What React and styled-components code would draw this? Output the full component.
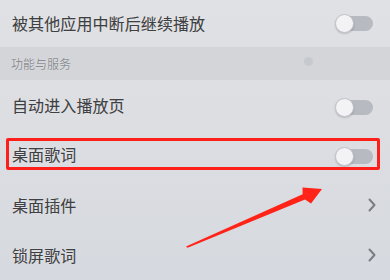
import React from 'react'
import styled, { createGlobalStyle } from 'styled-components'

const GlobalStyle = createGlobalStyle`
  html, body {
    margin: 0;
    padding: 0;
  }
  body {
    font-family: "Noto Sans CJK SC", "Noto Sans", sans-serif;
  }
`

const Screen = styled.div`
  position: relative;
  width: 390px;
  height: 280px;
  overflow: hidden;
  background: linear-gradient(180deg, #e0e1e4 0%, #dcdee2 45%, #d6d9df 100%);
  display: flex;
  flex-direction: column;
`

const Row = styled.div`
  position: relative;
  height: ${p => p.$h || 50}px;
  flex: none;
  display: flex;
  align-items: center;
  justify-content: space-between;
  padding: 0 17px 0 12px;
  box-sizing: border-box;
  ${p => p.$highlight && `
    &::after {
      content: '';
      position: absolute;
      left: 6px;
      right: 10px;
      top: 8px;
      bottom: 10px;
      border: 3px solid #ff1f1a;
      border-radius: 2px;
      box-sizing: border-box;
    }
  `}
`

const Label = styled.span`
  font-size: 16px;
  color: #3e3f42;
  letter-spacing: 0.1px;
  text-shadow: 0 0 1px rgba(255, 255, 255, 0.9), 0 0 0.6px rgba(60, 60, 64, 0.6);
  transform: translateY(${p => p.$dy || 0}px);
`

const Section = styled.div`
  position: relative;
  height: 33px;
  flex: none;
  display: flex;
  align-items: center;
  padding-left: 11px;
  background: #d3d5d9;
`

const SectionTitle = styled.span`
  font-size: 12px;
  color: #8b8d92;
  text-shadow: 0 0 1px rgba(255, 255, 255, 0.8);
`

const Speck = styled.span`
  position: absolute;
  left: 304px;
  top: 10px;
  width: 9px;
  height: 9px;
  border-radius: 50%;
  background: #c6c9cf;
  filter: blur(0.6px);
`

const Toggle = styled.span`
  position: relative;
  width: 38px;
  height: 19px;
  flex: none;
  transform: translateY(${p => p.$dy || 0}px);
  &::before {
    content: '';
    position: absolute;
    right: 0;
    top: 2px;
    width: 30px;
    height: 15px;
    border-radius: 8px;
    background: #b7bac1;
  }
  &::after {
    content: '';
    position: absolute;
    left: 0;
    top: 0;
    width: 19px;
    height: 19px;
    border-radius: 50%;
    box-sizing: border-box;
    background: #f3f3f5;
    border: 1px solid #c3c5ca;
    box-shadow: 0 1px 2px rgba(0, 0, 0, 0.18);
  }
`

const Chevron = () => (
  <svg width="10" height="14" viewBox="0 0 10 14" style={{ marginRight: -4 }}>
    <path d="M2.5 1.5 L7.5 7 L2.5 12.5" fill="none" stroke="#7b7d82" strokeWidth="2" strokeLinecap="round" strokeLinejoin="round" />
  </svg>
)

const Overlay = styled.svg`
  position: absolute;
  left: 0;
  top: 0;
  pointer-events: none;
`

export default function App() {
  return (
    <>
      <GlobalStyle />
      <Screen>
        <Row $h={47}>
          <Label $dy={-1}>被其他应用中断后继续播放</Label>
          <Toggle />
        </Row>
        <Section>
          <SectionTitle>功能与服务</SectionTitle>
          <Speck />
        </Section>
        <Row>
          <Label>自动进入播放页</Label>
          <Toggle $dy={2} />
        </Row>
        <Row $highlight>
          <Label $dy={-1}>桌面歌词</Label>
          <Toggle $dy={1} />
        </Row>
        <Row>
          <Label>桌面插件</Label>
          <Chevron />
        </Row>
        <Row>
          <Label>锁屏歌词</Label>
          <Chevron />
        </Row>
        <Overlay width="390" height="280" viewBox="0 0 390 280">
          <polygon
            points="186,246.5 302.6,194.2 302.5,187.5 322,189 311,203.5 305,199.4 187.6,247.8"
            fill="#ff2318"
          />
        </Overlay>
      </Screen>
    </>
  )
}
